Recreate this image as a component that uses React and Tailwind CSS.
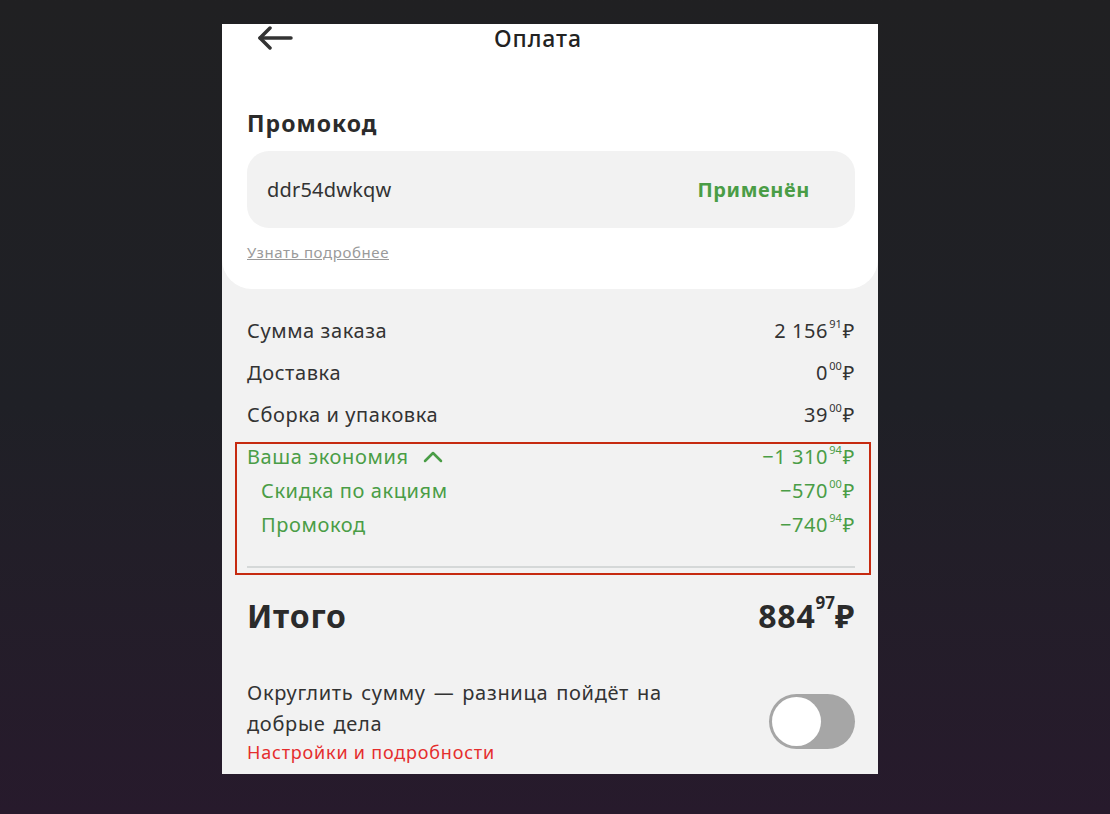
import React from 'react';

const font = { fontFamily: '"Noto Sans", "Liberation Sans", sans-serif' };

const Price = ({ minus, rub, kop, className = '' }) => (
    <span className={`flex items-start ${className}`}>
        <span>{minus ? '−' : ''}{rub}</span>
        <span className="text-[11px] leading-none mt-[2px] mx-[1px] tracking-normal">{kop}</span>
        <span>₽</span>
    </span>
);

const Row = ({ label, rub, kop }) => (
    <div className="h-[42px] flex items-center justify-between text-[20px] text-[#333333]">
        <span>{label}</span>
        <Price rub={rub} kop={kop} />
    </div>
);

const App = () => {
    return (
        <div className="min-h-[814px] bg-gradient-to-b from-[#202022] via-[#1f2026] to-[#271a2c] pl-[222px] pt-[24px] tracking-[0.6px]" style={font}>
            <div className="w-[656px] h-[750px] bg-[#f2f2f2]">
                {/* white top card */}
                <div className="bg-white rounded-b-[30px] pl-[25px] pr-[23px] pb-[28px]">
                    <div className="h-[28px] relative flex items-center justify-center">
                        <svg className="absolute left-[10px] top-[2px]" width="36" height="24" viewBox="0 0 36 24" fill="none" stroke="#333333" strokeWidth="3.5" strokeLinecap="round" strokeLinejoin="round">
                            <path d="M34 12H3" />
                            <path d="M13 2L3 12L13 22" />
                        </svg>
                        <span className="-ml-[26px] text-[23px] leading-[28px] font-medium text-[#222222] tracking-[0.9px]">Оплата</span>
                    </div>
                    <h2 className="mt-[57px] text-[23px] leading-[28px] font-bold text-[#2b2b2b] tracking-[1px]">Промокод</h2>
                    <div className="mt-[14px] h-[77px] rounded-[22px] bg-[#f2f2f2] px-[20px] flex items-center justify-between">
                        <span className="text-[20px] text-[#333333] tracking-[0.2px]">ddr54dwkqw</span>
                        <span className="text-[20px] font-bold text-[#4a9d46] mr-[25px] tracking-[0.6px]">Применён</span>
                    </div>
                    <div className="mt-[15px] text-[15px] leading-[18px] text-[#9a9a9a] underline">Узнать подробнее</div>
                </div>

                {/* summary */}
                <div className="pl-[25px] pr-[23px] pt-[21px]">
                    <Row label="Сумма заказа" rub="2 156" kop="91" />
                    <Row label="Доставка" rub="0" kop="00" />
                    <Row label="Сборка и упаковка" rub="39" kop="00" />

                    <div className="mt-[6px] -ml-[12px] -mr-[16px] border-2 border-[#c62a10] pl-[10px] pr-[14px] pt-0 pb-[5px] text-[#4a9d46] text-[20px]">
                        <div className="h-[26px] flex items-center justify-between">
                            <span className="flex items-center gap-[14px]">
                                Ваша экономия
                                <svg width="20" height="12" viewBox="0 0 20 12" fill="none" stroke="#4a9d46" strokeWidth="2.5" strokeLinecap="round" strokeLinejoin="round">
                                    <path d="M2 10L10 2L18 10" />
                                </svg>
                            </span>
                            <Price minus rub="1 310" kop="94" />
                        </div>
                        <div className="mt-[4px] h-[34px] pl-[14px] flex items-center justify-between">
                            <span>Скидка по акциям</span>
                            <Price minus rub="570" kop="00" />
                        </div>
                        <div className="h-[34px] pl-[14px] flex items-center justify-between">
                            <span>Промокод</span>
                            <Price minus rub="740" kop="94" />
                        </div>
                        <div className="mt-[24px] h-[2px] bg-[#d5d8d8]" />
                    </div>

                    <div className="mt-[23px] h-[36px] flex items-center justify-between text-[32px] font-bold text-[#2b2b2b] tracking-[0.8px]">
                        <span>Итого</span>
                        <span className="flex items-start">
                            <span>884</span>
                            <span className="text-[17px] leading-none mt-[2px] tracking-normal">97</span>
                            <span>₽</span>
                        </span>
                    </div>

                    <div className="mt-[43px] flex items-center justify-between">
                        <div>
                            <p className="text-[20px] leading-[31px] text-[#333333] w-[450px] tracking-[0.7px] [word-spacing:2px]">Округлить сумму — разница пойдёт на добрые дела</p>
                            <p className="text-[18px] leading-[26px] text-[#e52d2d] tracking-[0.8px]">Настройки и подробности</p>
                        </div>
                        <div className="w-[86px] h-[55px] rounded-full bg-[#a6a6a6] p-[3px] flex items-center">
                            <div className="w-[49px] h-[49px] rounded-full bg-white" />
                        </div>
                    </div>
                </div>
            </div>
        </div>
    );
};

export default App;
